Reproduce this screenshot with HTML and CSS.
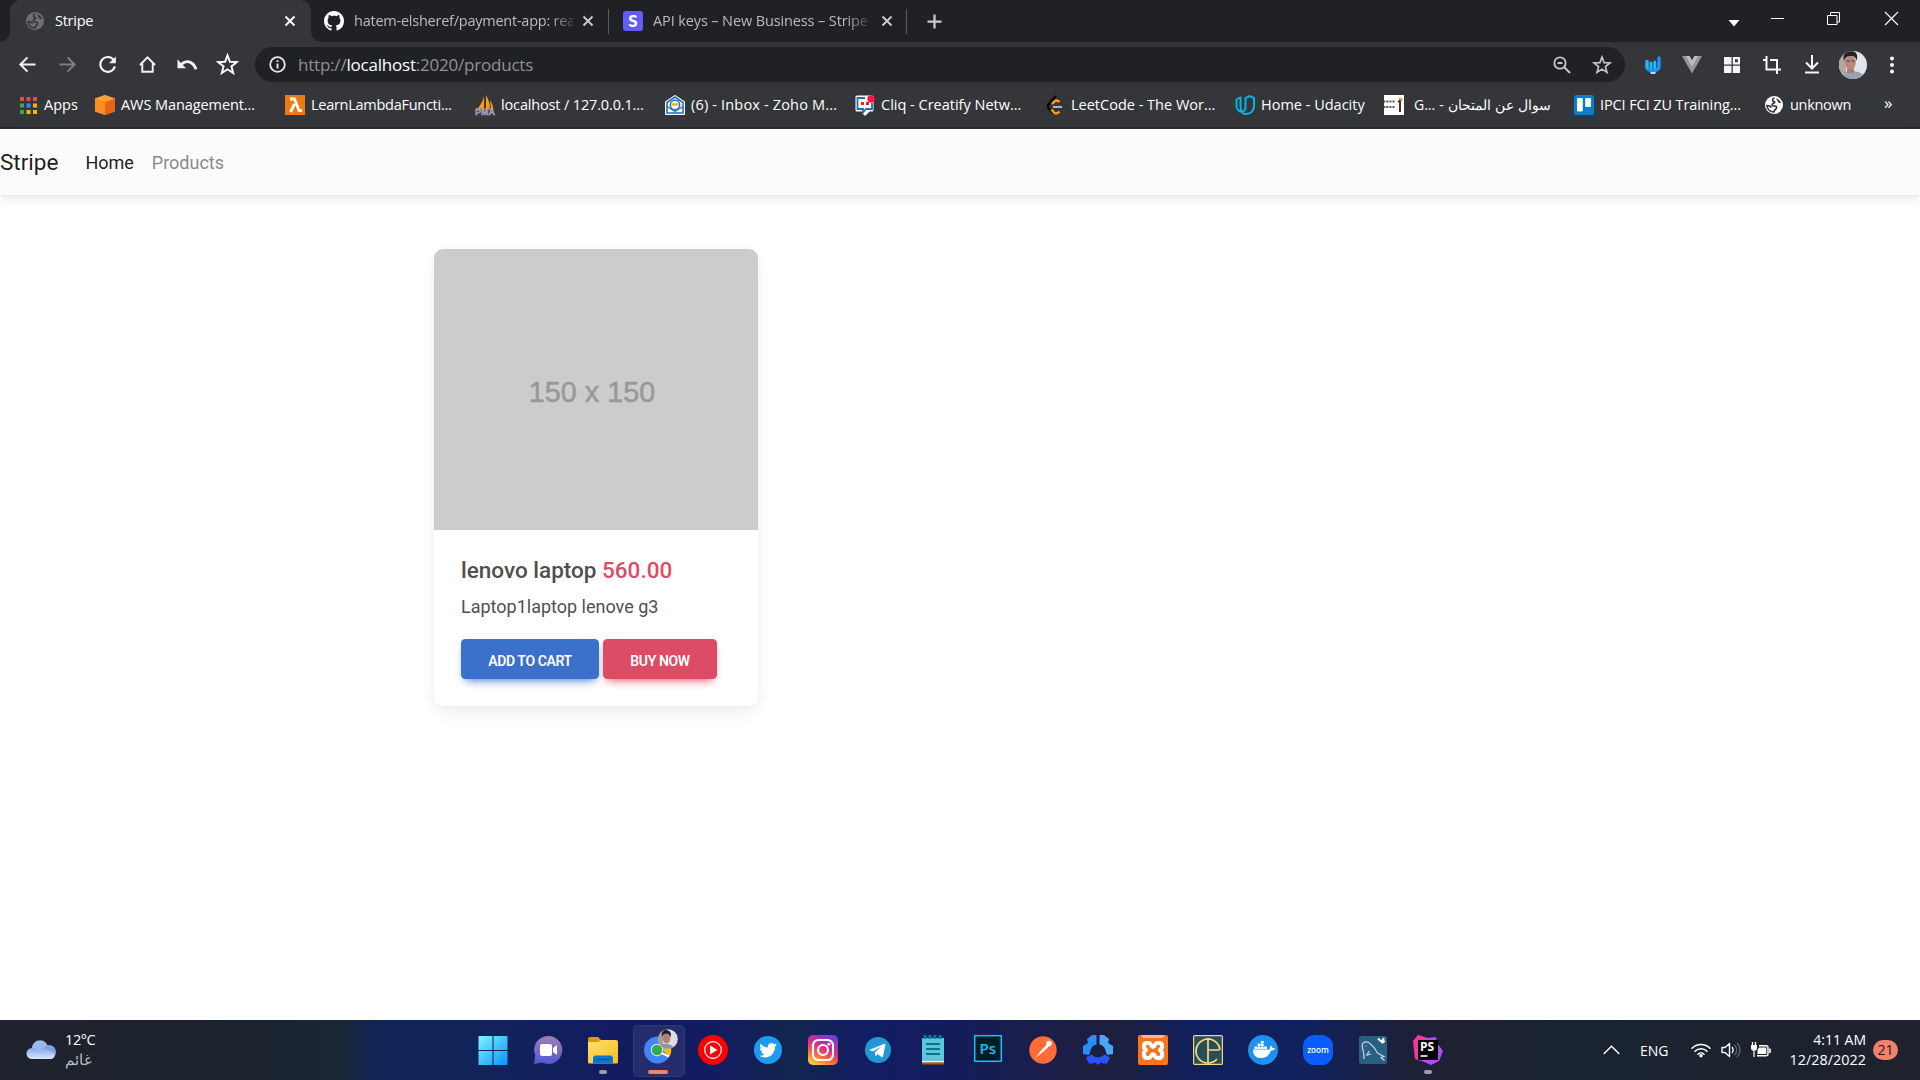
FILE: index.html
```html
<!DOCTYPE html>
<html lang="en">
<head>
<meta charset="utf-8">
<title>Stripe</title>
<link rel="stylesheet" href="styles.css">
</head>
<body>
<svg class="defs" width="0" height="0">
  <defs>
    <symbol id="x" viewBox="0 0 12 12"><path d="M1.5 1.5l9 9M10.500 1.500l-9 9" stroke="currentColor" stroke-width="1.900" fill="none"/></symbol>
    <symbol id="star" viewBox="0 0 24 24"><path d="M12 2.500l2.500 6.700 7.200.3-5.600 4.500 1.900 6.900L12 17l-6 3.900 1.900-6.900-5.600-4.500 7.200-.3z" fill="none" stroke="currentColor" stroke-width="2"/></symbol>
    <symbol id="globe" viewBox="0 0 20 20"><circle cx="10" cy="10" r="9" fill="currentColor"/><path d="M10.500 3C8 3.500 8 6 10 6.500c1.500.5.500 1.500-1 2-1.500.500-1 2.500 1 2.500 2.500 0 3 1 2.500 2.200-.5 1-2 .8-2.500 3.800-4 0-6.700-2.700-7-6.500 2 0 3.500.5 4.500 2" fill="none" stroke="#35363a" stroke-width="1.700"/><path d="M12 3.500c2.500.5 4 2 5 4.500-2 .5-3-.5-3.500-2z" fill="#35363a"/></symbol>
  </defs>
</svg>

<header class="browser">
  <div class="tabs">
    <div class="tab tab-active">
      <svg class="i20 dim" viewBox="0 0 20 20"><use href="#globe"/></svg>
      <span class="tab-title t-stripe">Stripe</span>
      <svg class="i12 white"><use href="#x"/></svg>
    </div>
    <div class="tab tab-gh">
      <svg class="i20" viewBox="0 0 16 16"><path fill="#fff" d="M8 0C3.580 0 0 3.580 0 8c0 3.540 2.290 6.530 5.470 7.590.4.070.55-.17.55-.38 0-.19-.01-.82-.01-1.490-2.010.37-2.530-.49-2.690-.94-.09-.23-.48-.94-.82-1.130-.28-.15-.68-.52-.01-.53.63-.01 1.080.58 1.230.82.72 1.210 1.870.87 2.330.66.07-.52.28-.87.51-1.070-1.780-.2-3.640-.89-3.640-3.950 0-.87.31-1.590.82-2.150-.08-.2-.36-1.020.08-2.120 0 0 .67-.21 2.200.82.64-.18 1.320-.27 2-.27s1.360.09 2 .27c1.530-1.040 2.200-.82 2.200-.82.44 1.100.16 1.920.08 2.120.51.56.82 1.270.82 2.150 0 3.070-1.870 3.750-3.650 3.950.29.25.54.73.54 1.480 0 1.070-.01 1.930-.01 2.200 0 .21.15.46.55.38A8.010 8.010 0 0 0 16 8c0-4.420-3.580-8-8-8z"/></svg>
      <span class="tab-title t-gh fade">hatem-elsheref/payment-app: rea</span>
      <svg class="i12"><use href="#x"/></svg>
    </div>
    <i class="divider"></i>
    <div class="tab tab-api">
      <span class="stripe-logo">S</span>
      <span class="tab-title t-api fade">API keys – New Business – Stripe</span>
      <svg class="i12"><use href="#x"/></svg>
    </div>
    <i class="divider"></i>
    <svg class="plus" viewBox="0 0 16 16"><path d="M8 0.500v15M0.500 8h15" stroke="#c9cbce" stroke-width="2.400"/></svg>
    <div class="window">
      <svg width="12" height="8" class="caret"><path d="M0.500 1h11L6 7.500z" fill="#fff"/></svg>
      <svg width="13" height="13"><path d="M0 6.500h13" stroke="#fff"/></svg>
      <svg width="13" height="13"><path d="M.5 3.500h9.500v9H.5zM3.500 3.500V.500h9v9.500h-2.500" fill="none" stroke="#fff"/></svg>
      <svg width="13" height="13"><path d="M0 0l13 13M13 0L0 13" stroke="#fff" stroke-width="1.200"/></svg>
    </div>
  </div>

  <div class="toolbar">
    <div class="nav-icons">
      <svg viewBox="0 0 20 20"><path d="M18.500 10H3M10 2.500L2.500 10l7.500 7.500" fill="none" stroke="#f1f3f4" stroke-width="2.100"/></svg>
      <svg viewBox="0 0 20 20"><path d="M1.500 10H17M10 2.500l7.500 7.500-7.500 7.500" fill="none" stroke="#7d7f83" stroke-width="2.100"/></svg>
      <svg viewBox="0 0 20 20"><path d="M16.700 5.500A7.800 7.800 0 1 0 17.800 12" fill="none" stroke="#f1f3f4" stroke-width="2.200"/><path d="M18.800 1.500v7.200h-7.200z" fill="#f1f3f4"/></svg>
      <svg viewBox="0 0 20 20"><path d="M2 10.500L10 2.500l8 8M4.500 9v8.700h11V9" fill="none" stroke="#f1f3f4" stroke-width="2"/></svg>
      <svg class="undo" viewBox="0 0 22 20"><path d="M1 4.500V14h9L6.500 10.500c4.500-4 9.500-2.500 12.700 5l2.800-1C18.500 5 10.500 3.500 4.500 8.300z" fill="#f1f3f4"/></svg>
      <svg class="big white" viewBox="0 0 24 24"><use href="#star"/></svg>
    </div>
    <div class="omnibox">
      <svg width="17" height="17" viewBox="0 0 17 17"><circle cx="8.500" cy="8.500" r="7.300" fill="none" stroke="#e8eaed" stroke-width="1.800"/><path d="M8.500 7.500v5M8.500 4.200v1.900" stroke="#e8eaed" stroke-width="1.900"/></svg>
      <span class="url">http://<b>localhost</b>:2020/products</span>
      <svg class="mag" width="18" height="18" viewBox="0 0 18 18"><circle cx="7" cy="7" r="5.700" fill="none" stroke="#c4c6c9" stroke-width="1.800"/><path d="M11 11l6 6M4.500 7h5" stroke="#c4c6c9" stroke-width="1.900"/></svg>
      <svg class="ostar" width="20" height="20"><use href="#star"/></svg>
    </div>
    <div class="extensions">
      <svg class="e1" width="16" height="18" viewBox="0 0 16 18"><path d="M4 14h8l-2 4H6z" fill="#bfe6ff"/><path d="M2 5.500v5c0 3 2 4 5.500 4s6.500-1 6.500-4V2" fill="none" stroke="#1e90ff" stroke-width="3.400" stroke-linecap="round"/><path d="M2 5.500v6M6 7v5M9.800 6v6" stroke="#21b8f5" stroke-width="3" stroke-linecap="round"/></svg>
      <svg class="e2" width="20" height="18" viewBox="0 0 20 18"><path d="M0 0h7.500L10 4.500 12.500 0H20L10 17.500z" fill="#979797"/><path d="M4 0h3.500L10 4.500 12.500 0H16L10 10.500z" fill="#c0c0c0"/></svg>
      <svg class="e3" width="16" height="16"><path d="M0 0h7.500v7.500H0zM0 8.800h7.500V16H0zM8.800 8.800H16V16H8.800z" fill="#f5f6f7"/><path d="M9.900 1.100h5v5.300h-5z" fill="none" stroke="#f5f6f7" stroke-width="2.200"/></svg>
      <svg class="e4" width="18" height="18" viewBox="0 0 18 18"><path d="M0 4h3.500m0-4v13.500h11M7 4h7v14M14 13.500h4" fill="none" stroke="#f5f6f7" stroke-width="2"/></svg>
      <svg class="e5" width="16" height="19" viewBox="0 0 16 19"><path d="M8 0v13M2 7.500l6 6 6-6M1 17.500h14" fill="none" stroke="#f5f6f7" stroke-width="2"/></svg>
      <svg class="e6" width="28" height="28" viewBox="0 0 28 28"><clipPath id="av"><circle cx="14" cy="14" r="14"/></clipPath><g clip-path="url(#av)"><path d="M0 0h28v28H0z" fill="#e3e4ee"/><path d="M0 0h7v22H0z" fill="#b6a6a2"/><path d="M2 28c0-6 5-8 10-8s13 1 13 8z" fill="#9aa2ab"/><path d="M8 16h7v6H8z" fill="#a97e72"/><ellipse cx="11.500" cy="11.500" rx="5.300" ry="7.300" fill="#b98a7c"/><path d="M5 10C3 1 8 0 12 0s8 3 5.500 9.500c-1-4-3-4.500-6-4.500s-5 1-6.500 5z" fill="#252127"/><path d="M7.500 10h3M12.500 10h3" stroke="#463235"/></g></svg>
      <svg class="e7" width="6" height="18"><g fill="#f5f6f7"><circle cx="3" cy="2.500" r="2"/><circle cx="3" cy="9" r="2"/><circle cx="3" cy="15.500" r="2"/></g></svg>
    </div>
  </div>

  <nav class="bookmarks">
    <a class="w75 apps"><svg width="17" height="17" viewBox="0 0 17 17"><path d="M0 0h4v4H0zM6.500 0h4v4h-4zM13 0h4v4h-4z" fill="#ee4b3e"/><path d="M0 6.500h4v4H0zM0 13h4v4H0z" fill="#34a853"/><path d="M6.500 6.500h4v4h-4z" fill="#2f8cf5"/><path d="M6.500 13h4v4h-4zM13 6.500h4v4h-4zM13 13h4v4h-4z" fill="#fbb405"/></svg><span class="b1">Apps</span></a>
    <a><svg viewBox="0 0 20 20"><path d="M10 0l10 3.500v13L10 20 0 16.500v-13z" fill="#f58220"/><path d="M0 3.500L10 7v13L0 16.500z" fill="#f78e1e"/><path d="M20 3.500L10 7v13l10-3.500z" fill="#e8641b"/><path d="M0 3.500L10 0l10 3.500L10 7z" fill="#fba03a"/></svg><span class="b2">AWS Management...</span></a>
    <a><svg viewBox="0 0 20 20"><path d="M0 0h20v20H0z" fill="#ee7a10"/><path d="M5 4h4.500l4.500 11.500h3M9.500 9L5.500 17" fill="none" stroke="#fff" stroke-width="2.800"/></svg><span class="b3">LearnLambdaFuncti...</span></a>
    <a><svg viewBox="0 0 20 20"><path d="M9 1v12H3C6 9 8 6 9 1zM11 0c2 4 4 8 4 13h-4zM15 5c2 3 3 6 3 8h-2z" fill="#f89c1c"/><path d="M1 13h18l-1 2H2z" fill="#b9742b"/><text x="0" y="20" class="pma">PMA</text></svg><span class="b4">localhost / 127.0.0.1...</span></a>
    <a><svg viewBox="0 0 20 20"><path d="M1 7l9-6 9 6v12H1z" fill="#fff" stroke="#fff" stroke-width="2" stroke-linejoin="round"/><path d="M2 7.500L10 2l8 5.500V18H2z" fill="#fff" stroke="#226db4" stroke-width="1.600"/><path d="M2 11.500l8 5 8-5" fill="none" stroke="#226db4" stroke-width="1.200"/><circle cx="10" cy="10" r="4.700" fill="#fff" stroke="#226db4" stroke-width="1.500"/><path d="M6.500 9.500h7" stroke="#f4b81d" stroke-width="2.500"/></svg><span class="b5">(6) - Inbox - Zoho M...</span></a>
    <a><svg viewBox="0 0 20 20"><path d="M2 2h15v13h-3l-4 4-2-4H2z" fill="#fff" stroke="#fff" stroke-width="3" stroke-linejoin="round"/><path d="M10 3H2.500v11H8v3.500L11 14h6V8" fill="none" stroke="#226db4" stroke-width="1.800"/><path d="M6 7h3v3H6zM11 7h3v3h-3z" fill="#e42527"/><circle cx="16" cy="4" r="3.700" fill="#ff1744"/></svg><span class="b6">Cliq - Creatify Netw...</span></a>
    <a><svg viewBox="0 0 20 20"><path d="M11 1L4 8.500c-1.500 2-1.500 3.500 0 5.500l4 4" fill="none" stroke="#090909" stroke-width="2.400"/><path d="M7 9l3-3c1.500-1 3-.5 4.500 1M6.500 14.500l2.500 3c1.500 1.500 3.500 1 5.500-1" fill="none" stroke="#ffa116" stroke-width="2.400"/><path d="M8 12h9" stroke="#b3b3b3" stroke-width="2"/></svg><span class="b7">LeetCode - The Wor...</span></a>
    <a class="w149"><svg viewBox="0 0 20 20"><path d="M6 2L1.500 4.500V11c0 6 9 8.500 9 1V3L14.500 1 19 3v8c0 6-5 8.500-9.500 8C5.500 18 5.500 14 5.500 11V2" fill="none" stroke="#02b3e4" stroke-width="2"/></svg><span class="b8">Home - Udacity</span></a>
    <a class="exam"><svg viewBox="0 0 20 20"><path d="M0 0h20v20H0z" fill="#fff"/><path d="M0 6.500h11M0 12h11" stroke="#555" stroke-width="2.200" stroke-dasharray="1 .5"/><path d="M16 3v14M14 7l4-3" stroke="#423721" stroke-width="2"/><circle cx="16.500" cy="4" r="1.500" fill="#e0b040"/></svg><span class="b9" dir="ltr">G... - سوال عن المتحان</span></a>
    <a><svg viewBox="0 0 20 20"><rect width="20" height="20" rx="2.500" fill="#087ed0"/><rect x="3" y="3" width="5.800" height="13.500" rx="1" fill="#fff"/><rect x="11.200" y="3" width="5.800" height="9" rx="1" fill="#fff"/></svg><span class="b10">IPCI FCI ZU Training...</span></a>
    <a class="unk"><svg viewBox="0 0 20 20"><use href="#globe"/></svg><span class="b11">unknown</span></a>
    <span class="more">»</span>
  </nav>
</header>

<main class="page">
  <nav class="navbar">
    <a class="brand">Stripe</a><a class="link active">Home</a><a class="link">Products</a>
  </nav>
  <article class="card">
    <div class="thumb">150 x 150</div>
    <div class="card-body">
      <h5>lenovo laptop <span>560.00</span></h5>
      <p>Laptop1laptop lenove g3</p>
      <div class="actions"><button class="btn blue">ADD TO CART</button><button class="btn red">BUY NOW</button></div>
    </div>
  </article>
</main>

<footer class="taskbar">
  <div class="weather">
    <svg width="30" height="20" viewBox="0 0 30 20"><defs><linearGradient id="cl" x2="0" y2="1"><stop stop-color="#82a8ec"/><stop offset="1" stop-color="#dbe7fb"/></linearGradient></defs><circle cx="14" cy="8.500" r="8.300" fill="#9bb8ee"/><circle cx="23" cy="12" r="7" fill="#7fa2e6"/><path d="M6 19a5.500 5.500 0 0 1 0-11c3 0 5 1 7 3 2-3 5-3 7-2l8 4c2 4-1 6-4 6z" fill="url(#cl)"/></svg>
    <div><span class="temp">12°C</span><span class="cond">غائم</span></div>
  </div>
  <div class="dock">
    <a><svg viewBox="0 0 30 30"><defs><linearGradient id="wn" x2="1" y2="1"><stop stop-color="#7ff4ff"/><stop offset="1" stop-color="#0a93f5"/></linearGradient></defs><path d="M.5 1h14v14H.5zM15.500 1h14v14h-14zM.5 16h14v14H.5zM15.500 16h14v14h-14z" fill="url(#wn)"/></svg></a>
    <a><svg viewBox="0 0 30 30"><defs><linearGradient id="ch" x2="0" y2="1"><stop stop-color="#a07fb5"/><stop offset="1" stop-color="#5357d5"/></linearGradient></defs><path d="M15 1a14 14 0 1 1-6 26.500L1 29l1.200-8.500A14 14 0 0 1 15 1z" fill="url(#ch)"/><rect x="7" y="9" width="12" height="12" rx="2" fill="#fff"/><path d="M20 13l4-3v10l-4-3z" fill="#fff"/></svg></a>
    <a class="run"><svg viewBox="0 0 30 30"><defs><linearGradient id="fo" x2="1" y2="1"><stop stop-color="#ffdf6b"/><stop offset="1" stop-color="#fdbd23"/></linearGradient></defs><path d="M0 4a2 2 0 0 1 2-2h8l3 3v5H0z" fill="#dd9a06"/><path d="M0 7h10l3-2h15a2 2 0 0 1 2 2v20a1.500 1.500 0 0 1-1.500 1.500h-27A1.500 1.500 0 0 1 0 27z" fill="url(#fo)"/><path d="M5 28.500V23a2.500 2.500 0 0 1 2.500-2.500h15A2.500 2.500 0 0 1 25 23v5.500z" fill="#0f76c5"/><path d="M9 24.500h12" stroke="#084d8c" stroke-width="1.200" stroke-linecap="round"/></svg></a>
    <a class="current"><svg width="36" viewBox="0 0 36 30"><circle cx="14.500" cy="15" r="13.500" fill="#4285f4"/><path d="M19 14l7.500 7.500A13.500 13.500 0 0 0 28 12z" fill="#fbbc05"/><path d="M18.500 18l7.500 3.500" stroke="#fff" stroke-width="2"/><circle cx="14" cy="15" r="6.200" fill="#e4ecfb"/><circle cx="14" cy="15" r="5.200" fill="#34a853"/><clipPath id="a2"><circle cx="25" cy="4" r="9.800"/></clipPath><g clip-path="url(#a2)"><path d="M15-6h20v22H15z" fill="#dedde3"/><path d="M15-6h5v17h-5z" fill="#a99c96"/><ellipse cx="23.500" cy="3" rx="3.900" ry="5.500" fill="#b18375"/><path d="M19 2c-1-5 2-8 5-7s5 3 3.500 7c-1-4-6.500-5-8.500 0z" fill="#25212a"/><path d="M15 15c1-6 4-6 8-6s8 2 9 6z" fill="#8d949c"/></g></svg></a>
    <a><svg viewBox="0 0 30 30"><circle cx="15" cy="15" r="15" fill="#f00"/><circle cx="15" cy="15" r="8.300" fill="none" stroke="#fff" stroke-width="1.200"/><path d="M12 10.500v9l7.500-4.500z" fill="#fff"/></svg></a>
    <a><svg viewBox="0 0 30 30"><circle cx="15" cy="15" r="14" fill="#1d9bf0"/><path transform="translate(6.300 6.500) scale(.73)" fill="#fff" d="M23.953 4.570a10 10 0 0 1-2.825.775 4.958 4.958 0 0 0 2.163-2.723c-.951.555-2.005.959-3.127 1.184a4.920 4.920 0 0 0-8.384 4.482C7.690 8.095 4.067 6.130 1.640 3.162a4.822 4.822 0 0 0-.666 2.475c0 1.710.87 3.213 2.188 4.096a4.904 4.904 0 0 1-2.228-.616v.06a4.923 4.923 0 0 0 3.946 4.827 4.996 4.996 0 0 1-2.212.085 4.936 4.936 0 0 0 4.604 3.417 9.867 9.867 0 0 1-6.102 2.105c-.39 0-.779-.023-1.170-.067a13.995 13.995 0 0 0 7.557 2.209c9.053 0 13.998-7.496 13.998-13.985 0-.21 0-.42-.015-.63A9.935 9.935 0 0 0 24 4.590z"/></svg></a>
    <a><svg viewBox="0 0 30 30"><defs><linearGradient id="ig" x1=".2" y1="1" x2=".7" y2="0"><stop stop-color="#ffc94a"/><stop offset=".3" stop-color="#f7703a"/><stop offset=".6" stop-color="#d72b88"/><stop offset="1" stop-color="#6f40cf"/></linearGradient></defs><rect width="30" height="30" rx="5" fill="url(#ig)"/><g fill="none" stroke="#fff" stroke-width="2.100"><rect x="5" y="5" width="20" height="20" rx="5.500"/><circle cx="15" cy="15" r="5"/></g><circle cx="20.800" cy="9.200" r="1.400" fill="#fff"/></svg></a>
    <a><svg viewBox="0 0 30 30"><circle cx="15" cy="15" r="13" fill="#2197d3"/><path d="M6 15L21.500 8.800c.7-.2 1 .2.900.9L20 21.500c-.2.900-.8 1-1.500.6l-3.800-2.800-2.200 2-.7-4 7-6-8.500 5z" fill="#fff"/></svg></a>
    <a><svg viewBox="0 0 30 30"><path d="M4 26h22v3.500H4z" fill="#b65a17"/><path d="M4 25h22v2.200H4z" fill="#fff"/><path d="M4 3h22v23H4z" fill="#5bc6de"/><path d="M7 0v4M12 0v4M17 0v4M22 0v4" stroke="#087a94" stroke-width="3"/><path d="M8 9h14M8 14h14M8 19h14" stroke="#09738c" stroke-width="2"/></svg></a>
    <a><svg viewBox="0 0 30 30"><rect x="1.700" y=".7" width="26.600" height="25.600" fill="#001d26" stroke="#00c8ff" stroke-width="1.500"/><text x="6.500" y="19" class="ps">Ps</text></svg></a>
    <a><svg viewBox="0 0 30 30"><circle cx="15" cy="15" r="13.700" fill="#ff6c37"/><path d="M7.500 23l6-8 5.500-5.500 2 2-5.500 5z" fill="#fff"/><circle cx="21" cy="8.500" r="2.700" fill="#fff"/></svg></a>
    <a><svg viewBox="0 0 30 30"><path d="M13.500 0v9.500A7 7 0 0 0 8 14l-2 6-6-1v-8l5-3-1-4 5-4z" fill="#2490ff"/><path d="M16.500 0v9.500A7 7 0 0 1 22 14l2 6 6-1v-8l-5-3 1-4-5-4z" fill="#4ba7fa"/><path d="M8.500 19.500a9 9 0 0 0 13 0l5.500 3-3 6h-4l-2-1.500-3 3-3-3-2 1.500H6l-3-6z" fill="#2854ff"/></svg></a>
    <a><svg viewBox="0 0 30 30"><rect width="30" height="30" rx="2" fill="#f8751c"/><path d="M3 0h24l-2 3H5z" fill="#f9b88b"/><path d="M10.500 8h-1.500c-4 0-4 5-1 7-3 2-3 8 1 8h1.500c3 0 2.500-4 4.500-4s1.500 4 4.500 4H21c4 0 4-6 1-8 3-2 3-7-1-7h-1.500c-3 0-2.500 4-4.500 4s-1.500-4-4.500-4z" fill="none" stroke="#fff" stroke-width="4" stroke-linejoin="round"/></svg></a>
    <a><svg viewBox="0 0 30 30"><rect x=".6" y=".6" width="28.800" height="28.800" rx="1" fill="#2b4d58" stroke="#f0d67c" stroke-width="1.200"/><path d="M15 3v24M24 24a12 12 0 1 1 2.500-11.500c.5 1.700.3 2.500-1.500 2.500H15" fill="none" stroke="#f6dc81" stroke-width="1.700"/></svg></a>
    <a><svg viewBox="0 0 30 30"><circle cx="15" cy="15" r="15" fill="#1d91ed"/><path d="M5 14.500h16.500c1-1 0-3 1-4 1 .5 1.500 1.500 1.500 2.500 1-.3 2-.2 3 .4-.7 1.600-2 2.200-4 2.100-2 5-5 7.500-10 7.500-5.500 0-8-3-8-8.500z" fill="#fff"/><path d="M6.500 11.500h2.800V14H6.500zM9.700 11.500h2.800V14H9.700zM12.900 11.500h2.800V14h-2.800zM16.100 11.500h2.800V14h-2.800zM9.700 8.500h2.800V11H9.700zM12.900 8.500h2.800V11h-2.800zM12.900 6h2.800v2h-2.800z" fill="#fff"/></svg></a>
    <a><svg viewBox="0 0 30 30"><rect width="30" height="30" rx="11.500" fill="#0b5cff"/><text x="15" y="17.500" class="zm">zoom</text></svg></a>
    <a><svg viewBox="0 0 30 30"><rect x="1" y="1" width="28" height="28" rx="2" fill="#285f82"/><path d="M6 24C7 18 3 12 4.500 9c2-3 6-2.500 8 0 4 3 5 5 7 9l6.500 3.500-3 1 3.500 3M11 16l-2 4 4-1M7.500 11h1" fill="none" stroke="#c8dbe6" stroke-width="1.200"/><path d="M20 3.500l4.500 4 2.500-1.500M23.500 7l2.500-4" stroke="#fff" stroke-width="2" fill="none"/></svg></a>
    <a class="run"><svg viewBox="0 0 30 30"><path d="M5 0l9 3 9-1 1 6 6 8-4 10-8 4-9-4-5-1-3-18z" fill="#b24cf4"/><path d="M5 0l9 3-9 22-3-1L0 6z" fill="#f1369d"/><path d="M5 5h20v20H5z" fill="#000"/><text x="7" y="15.500" class="storm">PS</text><path d="M7.500 21h7" stroke="#fff" stroke-width="1.600"/></svg></a>
  </div>
  <div class="tray">
    <svg width="17" height="10"><path d="M.7 9L8.500 1.200 16.300 9" fill="none" stroke="#fff" stroke-width="1.400"/></svg>
    <span class="lang">ENG</span>
    <svg width="20" height="16" viewBox="0 0 20 16"><g fill="none" stroke="#fff" stroke-width="1.600" stroke-linecap="round"><path d="M1 6.200a12.700 12.700 0 0 1 18 0M4 9.300a8.500 8.500 0 0 1 12 0M7 12.200a4.300 4.300 0 0 1 6 0"/></g><circle cx="10" cy="13.800" r="1.700" fill="#fff"/></svg>
    <svg width="20" height="16" viewBox="0 0 20 16"><path d="M1 5.500v5h3l4.500 4V1.500L4 5.500z" fill="none" stroke="#fff" stroke-width="1.400" stroke-linejoin="round"/><path d="M11 5c1.500 2 1.500 4 0 6" fill="none" stroke="#fff" stroke-width="1.300"/><path d="M13.500 3c3 3 3 7 0 10M16 1c4 4 4 10 0 14" fill="none" stroke="#626974" stroke-width="1.300"/></svg>
    <svg width="20" height="16" viewBox="0 0 20 16"><path d="M1.500 0v4M4.500 0v4" stroke="#fff" stroke-width="1.300"/><path d="M0 3h6v3c0 2-1 2.500-2.400 2.500V15H2.400V8.500C1 8.500 0 8 0 6z" fill="#fff"/><path d="M8 3.700h7c1 0 2 .6 2 2v6c0 1.300-1 2-2 2H6" fill="none" stroke="#fff" stroke-width="1.400"/><path d="M8 5.500h7.300v6.500H6.500V8z" fill="#fff"/><path d="M19 6.500v4.500" stroke="#fff" stroke-width="1.600"/></svg>
    <div class="clock"><span class="time">4:11 AM</span><span class="date">12/28/2022</span></div>
    <span class="badge">21</span>
  </div>
</footer>
</body>
</html>
```
FILE: styles.css
```css
* { box-sizing: border-box; }
body { margin: 0; width: 1920px; height: 1080px; overflow: hidden; display: flex; flex-direction: column; background: #fff; font-family: "Open Sans", "Noto Sans", sans-serif; }
svg { display: block; flex: none; overflow: visible; }
.defs { position: absolute; }
.i20 { width: 20px; height: 20px; }
.i12 { width: 12px; height: 12px; color: #c9cbce; }
.white, .i12.white { color: #fff; }
.dim { color: #6d6f73; }

/* browser frame */
.browser { height: 129px; flex: none; background: #35363a; border-bottom: 2px solid #292a2d; color: #fff; }
.tabs { height: 42px; background: #202124; display: flex; align-items: center; }
.tab { display: flex; align-items: center; height: 42px; font-size: 14.5px; color: #b9bbbe; white-space: nowrap; }
.tab-title { margin-left: 10px; flex: 1; overflow: hidden; padding-bottom: 2px; }
.t-stripe { letter-spacing: -.25px; }
.t-gh { letter-spacing: -.24px; }
.t-api { letter-spacing: -.12px; }
.tab-active { width: 301px; margin-left: 10px; padding: 0 15px; background: #35363a; border-radius: 10px 10px 0 0; color: #fff; position: relative; }
.tab-active::before, .tab-active::after { content: ""; position: absolute; bottom: 0; width: 10px; height: 10px; }
.tab-active::before { left: -10px; background: radial-gradient(circle at 0 0, transparent 9.5px, #35363a 10px); }
.tab-active::after { right: -10px; background: radial-gradient(circle at 100% 0, transparent 9.5px, #35363a 10px); }
.tab-gh { width: 297px; padding: 0 14px 0 13px; }
.tab-api { width: 297px; padding: 0 13px 0 14px; }
.tab-gh .i12 { margin-left: 9px; }
.tab-api .i12 { margin-left: 13px; }
.fade { -webkit-mask-image: linear-gradient(90deg, #000 90%, rgba(0,0,0,.2)); mask-image: linear-gradient(90deg, #000 90%, rgba(0,0,0,.2)); }
.divider { width: 1px; height: 25px; background: #5a5c60; }
.stripe-logo { width: 20px; height: 20px; border-radius: 3px; background: #635bff; color: #fff; font: 900 17px/19px Lato, sans-serif; text-align: center; }
.plus { width: 15px; height: 15px; margin-left: 20px; }
.window { margin-left: auto; display: flex; align-items: center; gap: 43px; padding: 0 22px 6px 0; }
.window svg:last-child { margin-left: 2px; }
.caret { margin: 10px -12px 0 0; }

.toolbar { height: 45px; display: flex; align-items: center; }
.nav-icons { display: flex; align-items: center; width: 255px; padding-left: 18px; gap: 21px; }
.nav-icons svg { width: 19px; height: 19px; }
.nav-icons .undo { width: 22px; margin: 0 -1px 0 -2px; }
.nav-icons .big { width: 23px; height: 23px; margin-left: -2px; }
.omnibox { width: 1370px; height: 35px; border-radius: 18px; background: #202124; display: flex; align-items: center; padding: 0 13px 0 14px; }
.url { margin-left: 12px; font-size: 17px; color: #8f9296; letter-spacing: -.21px; }
.url b { color: #fff; font-weight: 400; }
.mag { margin-left: auto; margin-right: 21px; }
.ostar { color: #c4c6c9; }
.extensions { flex: 1; display: flex; align-items: center; padding-left: 20px; }
.e2 { margin-left: 21px; }
.e3 { margin-left: 22px; }
.e4 { margin-left: 23px; }
.e5 { margin-left: 23px; }
.e6 { margin-left: 19px; }
.e7 { margin-left: 22px; }

.bookmarks { height: 38px; display: flex; align-items: center; padding: 0 0 2px 20px; font-size: 14.5px; white-space: nowrap; }
.bookmarks a { width: 190px; flex: none; display: flex; align-items: center; gap: 6px; }
.bookmarks a svg { width: 20px; height: 20px; }
.bookmarks a span { padding-bottom: 2px; }
.bookmarks .w75 { width: 75px; gap: 7px; }
.bookmarks .apps svg { width: 17px; height: 17px; }
.bookmarks .w149 { width: 149px; }
.bookmarks .exam { gap: 10px; }
.bookmarks .unk { width: 125px; }
.b2 { letter-spacing: -.08px; }
.b3 { letter-spacing: -.27px; }
.b4 { letter-spacing: -.15px; }
.b5 { letter-spacing: .17px; }
.b9 { font-size: 14px; word-spacing: .4px; }
.b10 { letter-spacing: -.1px; }
.b11 { letter-spacing: -.3px; }
.more { font-size: 17px; line-height: 20px; margin: -4px 0 0 -5px; }
.pma { font: bold 9px "Liberation Sans", sans-serif; fill: #7b7bb0; stroke: #ddd; stroke-width: .3px; }

/* web page */
.page { flex: 1; font-family: Roboto, sans-serif; color: #4f4f4f; }
.navbar { height: 66px; background: #fbfbfb; display: flex; align-items: center; box-shadow: 0 4.500px 13.500px rgba(0,0,0,.07), 0 2.250px 4.500px rgba(0,0,0,.05); font-size: 18px; }
.brand { font-size: 22.500px; color: rgba(0,0,0,.9); margin-right: 27px; }
.link { color: #8a8a8a; margin-right: 18px; }
.link.active { color: rgba(0,0,0,.9); }
.card { width: 324px; height: 457px; margin: 54px 0 0 434px; border-radius: 9px; box-shadow: 0 2.250px 17px -3px rgba(0,0,0,.07), 0 11px 22.500px -2px rgba(0,0,0,.04); }
.thumb { height: 281px; border-radius: 9px 9px 0 0; background: #ccc; color: #999; font: 28.800px "Liberation Sans", sans-serif; display: flex; align-items: center; justify-content: center; padding: 6px 8px 0 0; -webkit-text-stroke: .5px #999; }
.card-body { padding: 27px; }
h5 { margin: 0 0 8px; font-size: 22.500px; line-height: 27px; font-weight: 500; }
h5 span { color: #dc4c64; }
p { margin: 0 0 18px; font-size: 18px; line-height: 29px; }
.actions { display: flex; gap: 4px; }
.btn { height: 40px; border: 0; border-radius: 4.500px; color: #fff; font: 600 14px/20px Roboto, sans-serif; letter-spacing: -.38px; padding: 3px 0 0; }
.blue { width: 138px; background: #3b71ca; box-shadow: 0 4.500px 10px -4px #3b71ca; }
.red { width: 114px; background: #dc4c64; box-shadow: 0 4.500px 10px -4px #dc4c64; }

/* taskbar */
.taskbar { height: 60px; flex: none; display: flex; align-items: center; color: #fff; background: linear-gradient(90deg, #1e222c 0, #1b232e 250px, #1a2636 340px, #112456 375px, #112459 480px, #121c60 630px, #131c60 720px, #12254e 790px, #111e62 860px, #131c5e 930px, #1d1f3e 1110px, #10205f 1200px, #10215c 1310px, #1c2038 1400px, #1d2230 1480px, #192431 1560px, #1e222c 1920px); }
.weather { width: 465px; padding-left: 26px; display: flex; align-items: center; gap: 9px; }
.weather span { display: block; font-size: 14.5px; line-height: 20px; letter-spacing: -.4px; }
.weather .cond { color: #b9bcc2; }
.dock { display: flex; width: 990px; }
.dock a { width: 55px; height: 60px; display: flex; align-items: center; padding-left: 12.5px; position: relative; }
.dock a svg { width: 30px; height: 30px; position: relative; }
.dock .current svg { width: 36px; }
.current::before { content: ""; position: absolute; left: 3px; top: 5px; width: 50px; height: 50px; border-radius: 5px; background: rgba(255,255,255,.08); border: 1px solid rgba(255,255,255,.06); }
.run::after, .current::after { content: ""; position: absolute; left: 24px; bottom: 6px; width: 8px; height: 4px; border-radius: 2px; background: #9a9eab; }
.current::after { left: 18px; width: 20px; background: #f4816b; }
.ps { font: 600 15px "Open Sans", sans-serif; fill: #00c8ff; }
.zm { font: 600 8.200px "Open Sans", sans-serif; fill: #fff; text-anchor: middle; }
.storm { font: 700 12px "Open Sans", sans-serif; fill: #fff; }
.tray { flex: 1; display: flex; align-items: center; padding-left: 148px; font-size: 14px; }
.lang { margin: 0 22px 0 20px; width: 29px; }
.tray svg + svg { margin-left: 10px; }
.clock { margin-left: 10px; width: 85px; text-align: right; }
.clock span { display: block; line-height: 20px; }
.clock .date { font-size: 14.4px; }
.badge { margin-left: 7px; width: 25px; height: 20px; border-radius: 10px; background: #f4816b; color: #1b1b1f; line-height: 20px; text-align: center; font-size: 14px; }
```
